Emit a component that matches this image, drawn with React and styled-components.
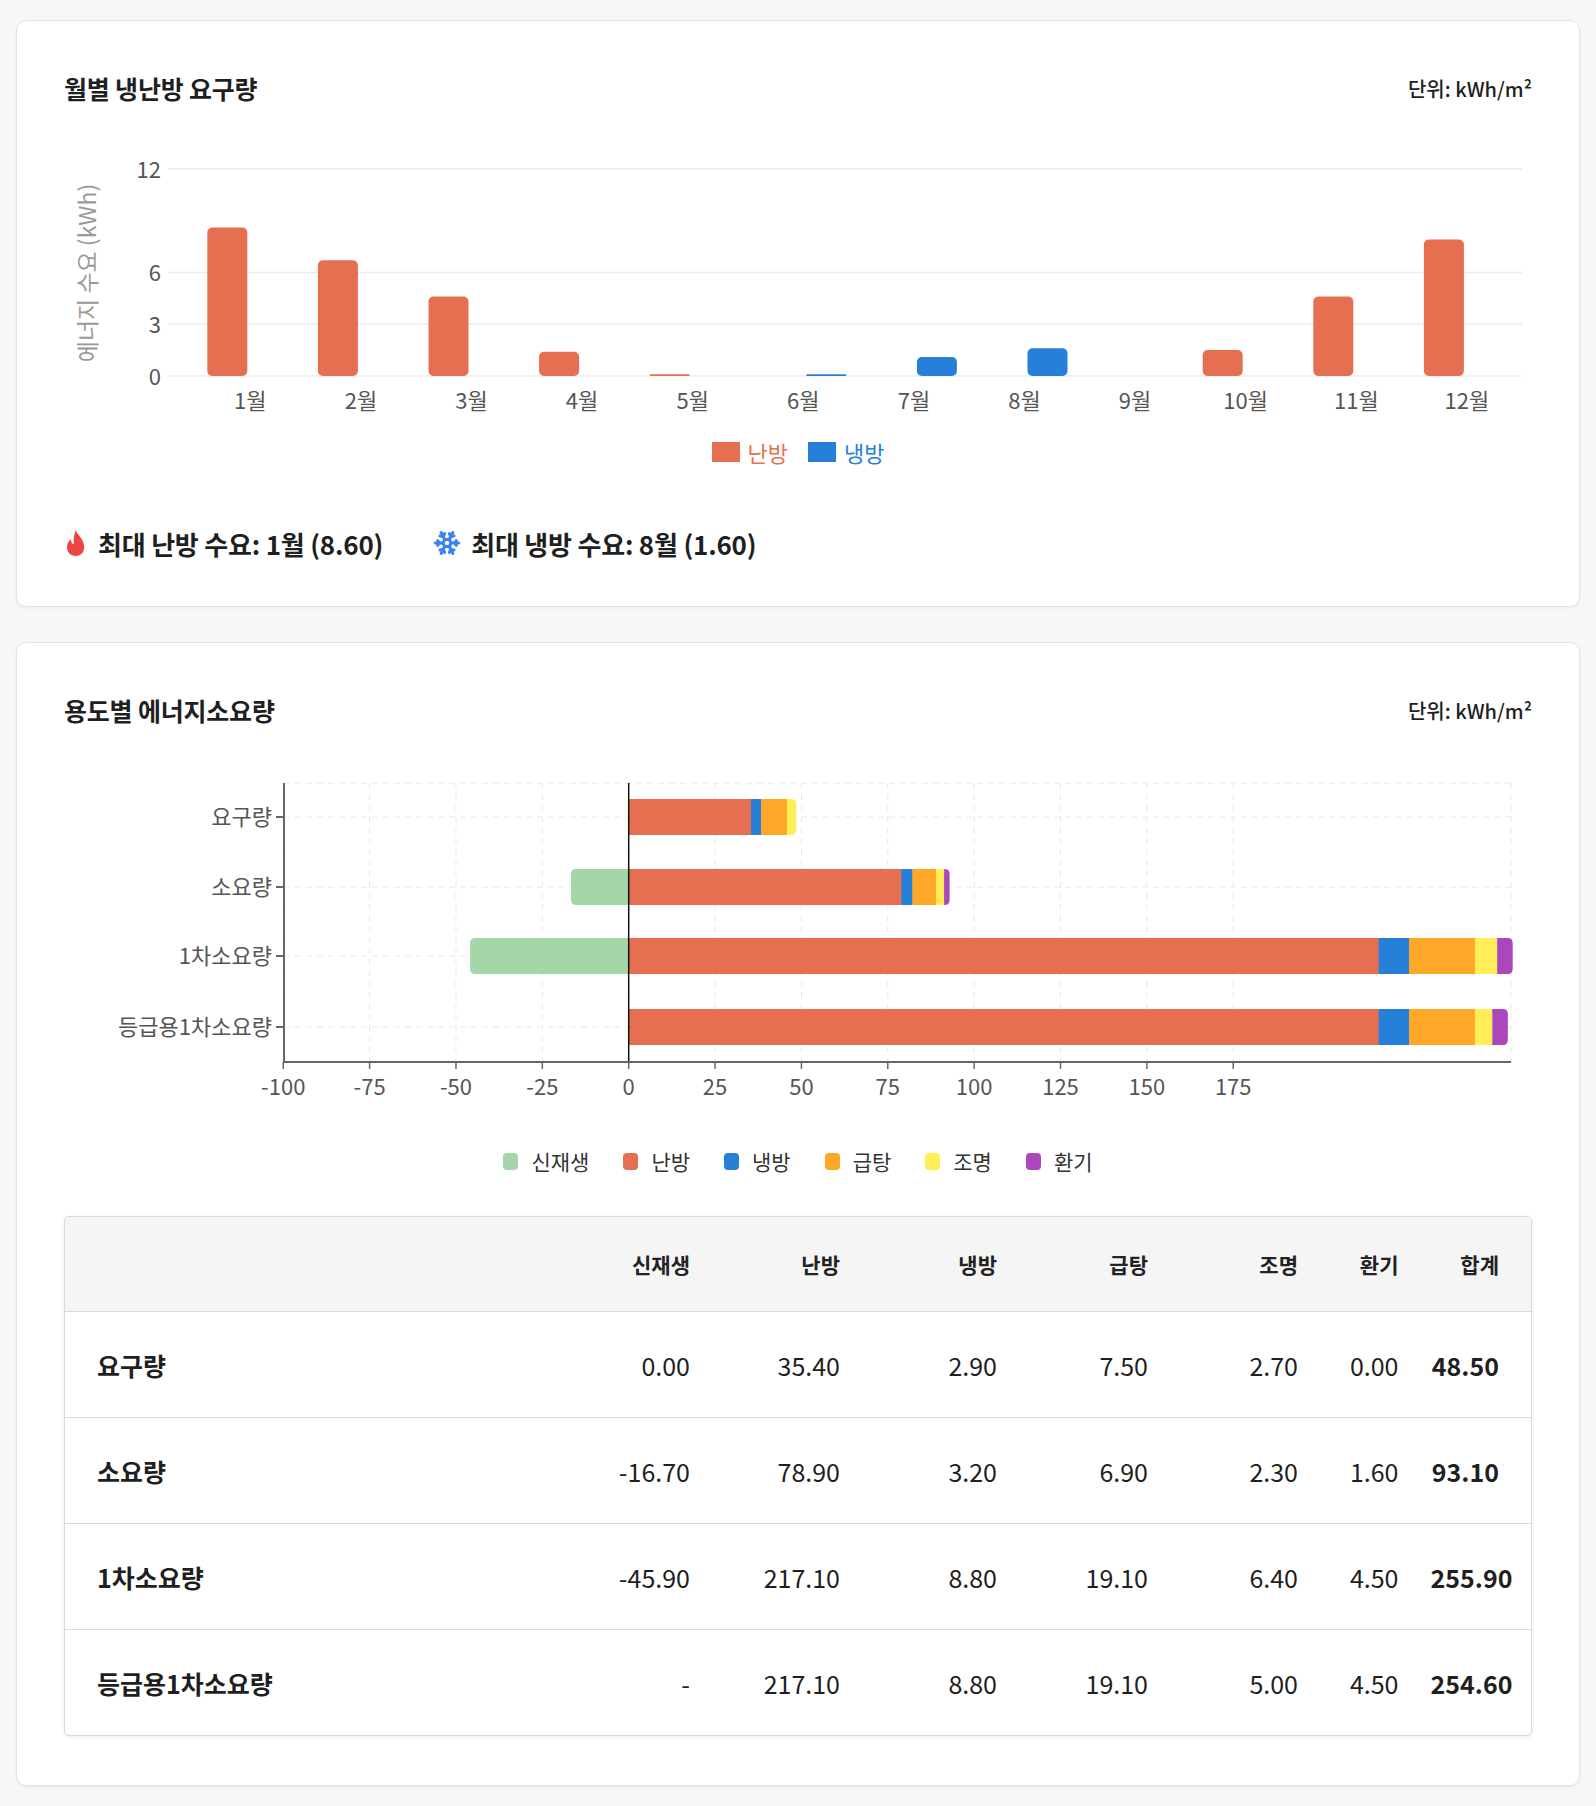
import React from "react";
import styled, { createGlobalStyle } from "styled-components";
import { Snowflake } from "lucide-react";

const Global = createGlobalStyle`
  body { margin: 0; background: #f7f7f7; font-family: "Noto Sans CJK KR", "Noto Sans", sans-serif; color: #1f1f1f; }
`;
const Page = styled.div`
  padding: 20px 16px 23px; display: flex; flex-direction: column; gap: 35px;
`;
const Card = styled.section`
  background: #fff; border: 1px solid #e3e3e3; border-radius: 10px;
  box-shadow: 0 1px 3px rgba(0,0,0,0.06);
  padding: 52px 47px ${p => p.$pb || 48}px;
`;
const Header = styled.div`
  display: flex; justify-content: space-between; align-items: center; height: 30px;
`;
const Title = styled.h2`
  margin: 0; font-size: 25px; font-weight: 700; letter-spacing: -0.2px;
`;
const Unit = styled.span`
  font-size: 20px; font-weight: 500;
`;
const Svg = styled.svg`
  display: block; margin-top: ${p => p.$mt}px; font-family: "Noto Sans CJK KR", "Noto Sans", sans-serif;
`;
const Legend = styled.div`
  display: flex; justify-content: center; align-items: center; gap: ${p => p.$gap}px;
  margin-top: ${p => p.$mt}px; height: 24px;
`;
const LegendItem = styled.div`
  display: flex; align-items: center; gap: ${p => p.$g || 6}px; font-size: ${p => p.$fs || 20}px;
  color: ${p => p.$color || "#333"};
`;
const Swatch = styled.span`
  width: ${p => p.$w}px; height: ${p => p.$h}px; border-radius: ${p => p.$r}px; background: ${p => p.$color}; display: inline-block;
`;
const Stats = styled.div`
  display: flex; gap: 50px; margin-top: 64px; height: 30px; align-items: center;
`;
const Stat = styled.div`
  display: flex; align-items: center; gap: 10px; font-size: 26px; font-weight: 600; letter-spacing: -0.2px;
`;
const Table = styled.table`
  margin-top: 43px; width: 100%; border-collapse: separate; border-spacing: 0;
  border: 1px solid #d9d9d9; border-radius: 5px; overflow: hidden;
  box-shadow: 0 1px 4px rgba(0,0,0,0.08); table-layout: fixed;
`;
const Th = styled.th`
  background: #f5f5f5; height: 95px; font-size: 21px; font-weight: 600; text-align: right;
  padding: 0 32px 0 0; border-bottom: 1px solid #d9d9d9; color: #222;
  width: ${p => (p.$w ? `${p.$w}px` : "auto")}; box-sizing: border-box;
`;
const Td = styled.td`
  height: 105px; font-size: 25px; text-align: ${p => p.$left ? "left" : "right"};
  padding: ${p => p.$left ? "0 0 0 32px" : "0 32px 0 0"};
  font-weight: ${p => p.$bold ? 700 : 400};
  border-bottom: ${p => p.$last ? "none" : "1px solid #d9d9d9"}; color: #1f1f1f;
`;

const C = { ren: "#a5d6a7", heat: "#e76f51", cool: "#2680d9", hw: "#ffa726", light: "#ffee58", vent: "#ab47bc" };

const heat = [8.6, 6.7, 4.6, 1.4, 0.1, 0, 0, 0, 0, 1.5, 4.6, 7.9];
const cool = [0, 0, 0, 0, 0, 0.1, 1.1, 1.6, 0, 0, 0, 0];

function MonthChart() {
  const x0 = 131, cw = 110.6, zero = 243, k = 17.27;
  const ticks = [0, 3, 6, 12];
  return (
    <Svg $mt={30} width="1468" height="290">
      <text transform="translate(32,140) rotate(-90)" textAnchor="middle" fontSize="23" fill="#999">에너지 수요 (kWh)</text>
      {ticks.map(t => (
        <g key={t}>
          <line x1={x0 - 27} x2="1458" y1={zero - t * k} y2={zero - t * k} stroke="#ececec" strokeWidth="1.5" />
          <text x="97" y={zero - t * k + 9} textAnchor="end" fontSize="22" fill="#555">{t}</text>
        </g>
      ))}
      {heat.map((h, i) => {
        const c = x0 + cw * i + cw / 2;
        const hh = h * k, ch = cool[i] * k;
        return (
          <g key={i}>
            {h > 0 && <rect x={c - 43} y={zero - hh} width="40" height={hh} rx={h > 0.5 ? 5 : 1} fill={C.heat} />}
            {cool[i] > 0 && <rect x={c + 3} y={zero - ch} width="40" height={ch} rx={cool[i] > 0.5 ? 5 : 1} fill={C.cool} />}
            <text x={c} y="276" textAnchor="middle" fontSize="22" fill="#555">{i + 1}월</text>
          </g>
        );
      })}
    </Svg>
  );
}

const rows = [
  { name: "요구량", v: [0, 35.4, 2.9, 7.5, 2.7, 0], tot: "48.50" },
  { name: "소요량", v: [-16.7, 78.9, 3.2, 6.9, 2.3, 1.6], tot: "93.10" },
  { name: "1차소요량", v: [-45.9, 217.1, 8.8, 19.1, 6.4, 4.5], tot: "255.90" },
  { name: "등급용1차소요량", v: [0, 217.1, 8.8, 19.1, 5.0, 4.5], tot: "254.60", dash: true },
];
const colors = [C.ren, C.heat, C.cool, C.hw, C.light, C.vent];

function UseChart() {
  const left = 220, right = 1447, z = 564.7, k = 3.4545, top = 20, axis = 299;
  const ys = [54, 124, 193, 264];
  const ticks = [-100, -75, -50, -25, 0, 25, 50, 75, 100, 125, 150, 175];
  return (
    <Svg $mt={38} width="1468" height="340">
      {ticks.map(t => <line key={t} x1={z + t * k} x2={z + t * k} y1={top} y2={axis} stroke="#e8e8e8" strokeDasharray="6 5" />)}
      <line x1={right} x2={right} y1={top} y2={axis} stroke="#e8e8e8" strokeDasharray="6 5" />
      <line x1={left} x2={right} y1={top} y2={top} stroke="#e8e8e8" strokeDasharray="6 5" />
      {ys.map(y => <line key={y} x1={left} x2={right} y1={y} y2={y} stroke="#e8e8e8" strokeDasharray="6 5" />)}
      {rows.map((r, i) => {
        const y = ys[i] - 18;
        const segs = [];
        if (r.v[0] < 0) {
          const w = -r.v[0] * k;
          segs.push(<path key="n" d={`M${z} ${y} H${z - w + 5} Q${z - w} ${y} ${z - w} ${y + 5} V${y + 31} Q${z - w} ${y + 36} ${z - w + 5} ${y + 36} H${z} Z`} fill={C.ren} />);
        }
        let x = z;
        const pos = r.v.slice(1);
        const lastIdx = pos.reduce((a, v, j) => (v > 0 ? j : a), 0);
        pos.forEach((v, j) => {
          const w = v * k;
          if (w <= 0) return;
          if (j === lastIdx) {
            const rr = Math.min(5, w);
            segs.push(<path key={j} d={`M${x} ${y} H${x + w - rr} Q${x + w} ${y} ${x + w} ${y + rr} V${y + 36 - rr} Q${x + w} ${y + 36} ${x + w - rr} ${y + 36} H${x} Z`} fill={colors[j + 1]} />);
          } else {
            segs.push(<rect key={j} x={x} y={y} width={w + 0.5} height="36" fill={colors[j + 1]} />);
          }
          x += w;
        });
        return (
          <g key={r.name}>
            {segs}
            <line x1={left - 8} x2={left} y1={ys[i]} y2={ys[i]} stroke="#666" strokeWidth="2" />
            <text x={left - 12} y={ys[i] + 8} textAnchor="end" fontSize="22" fill="#555">{r.name}</text>
          </g>
        );
      })}
      <line x1={z} x2={z} y1={top} y2={axis} stroke="#111" strokeWidth="1.5" />
      <line x1={left} x2={left} y1={top} y2={axis} stroke="#666" strokeWidth="2" />
      <line x1={left} x2={right} y1={axis} y2={axis} stroke="#666" strokeWidth="2" />
      {ticks.map(t => (
        <g key={t}>
          <line x1={z + t * k} x2={z + t * k} y1={axis} y2={axis + 7} stroke="#666" strokeWidth="1.5" />
          <text x={z + t * k} y={axis + 33} textAnchor="middle" fontSize="22" fill="#555">{t}</text>
        </g>
      ))}
    </Svg>
  );
}

const Flame = () => (
  <svg width="24" height="28" viewBox="0 0 24 28">
    <path d="M12 1 C13 6 19 9 20 16 C21 23 17 27 12 27 C7 27 3 24 3 18 C3 14 5 12 7 10 C7 13 8 15 10 15 C9 10 10 5 12 1 Z" fill="#ef4444" />
  </svg>
);

const fmt = v => v.toFixed(2);
const widths = [485, 172, 150, 157, 151, 150, 0];

export default function App() {
  return (
    <>
      <Global />
      <Page>
        <Card $pb={48}>
          <Header><Title>월별 냉난방 요구량</Title><Unit>단위: kWh/m²</Unit></Header>
          <MonthChart />
          <Legend $gap={20} $mt={17}>
            <LegendItem $color={C.heat} $g={8} $fs={22}><Swatch $w={28} $h={20} $r={0} $color={C.heat} />난방</LegendItem>
            <LegendItem $color={C.cool} $g={8} $fs={22}><Swatch $w={28} $h={20} $r={0} $color={C.cool} />냉방</LegendItem>
          </Legend>
          <Stats>
            <Stat><Flame />최대 난방 수요: 1월 (8.60)</Stat>
            <Stat><Snowflake size={28} color="#3b82f6" strokeWidth={2.6} />최대 냉방 수요: 8월 (1.60)</Stat>
          </Stats>
        </Card>
        <Card $pb={49}>
          <Header><Title>용도별 에너지소요량</Title><Unit>단위: kWh/m²</Unit></Header>
          <UseChart />
          <Legend $gap={34} $mt={46}>
            {["신재생", "난방", "냉방", "급탕", "조명", "환기"].map((n, i) => (
              <LegendItem key={n} $g={13} $fs={21}><Swatch $w={15} $h={17} $r={4} $color={colors[i]} />{n}</LegendItem>
            ))}
          </Legend>
          <Table>
            <thead>
              <tr>
                {["", "신재생", "난방", "냉방", "급탕", "조명", "환기", "합계"].map((h, i) => (
                  <Th key={i} $w={widths[i] || undefined}>{h}</Th>
                ))}
              </tr>
            </thead>
            <tbody>
              {rows.map((r, i) => (
                <tr key={r.name}>
                  <Td $left $bold $last={i === 3}>{r.name}</Td>
                  {r.v.map((v, j) => <Td key={j} $last={i === 3}>{j === 0 && r.dash ? "-" : fmt(v)}</Td>)}
                  <Td $bold $last={i === 3}>{r.tot}</Td>
                </tr>
              ))}
            </tbody>
          </Table>
        </Card>
      </Page>
    </>
  );
}
